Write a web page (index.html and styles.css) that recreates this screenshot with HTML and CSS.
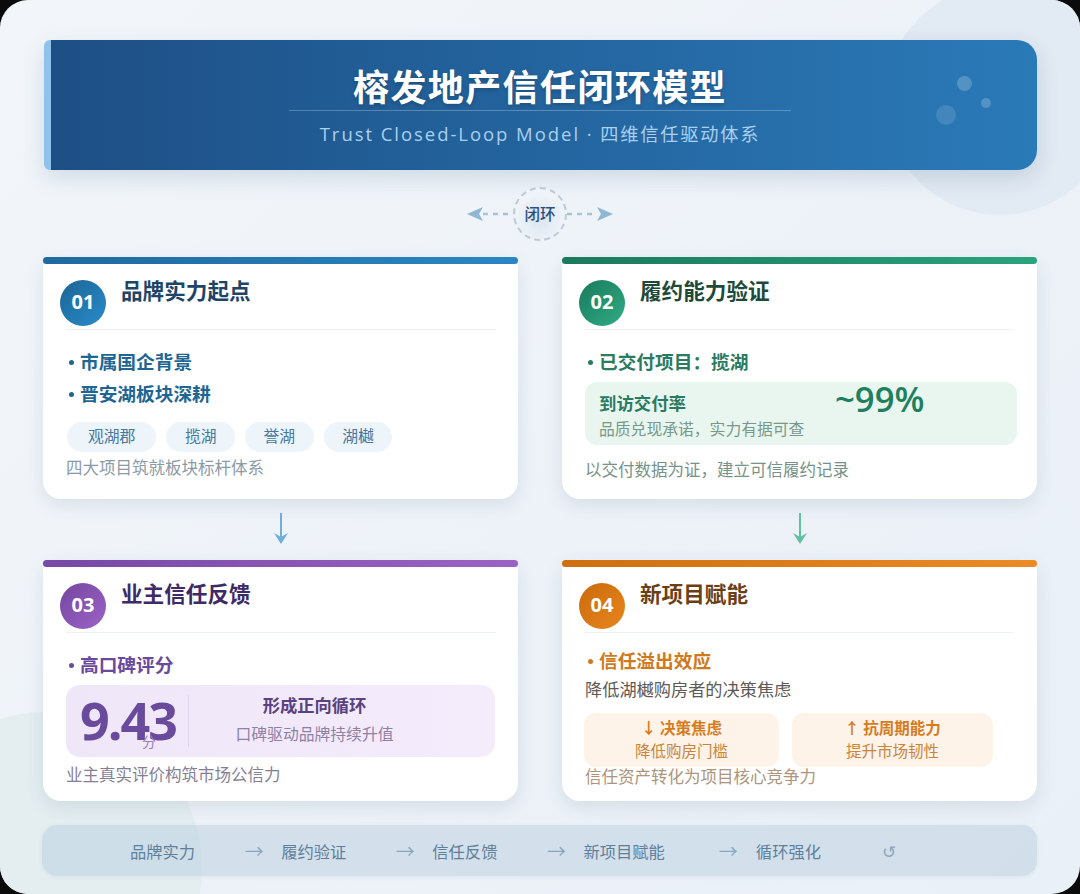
FILE: index.html
```html
<!DOCTYPE html>
<html lang="zh-CN">
<head>
  <meta charset="UTF-8" />
  <title>榕发地产信任闭环模型</title>
  <link rel="stylesheet" href="styles.css">
</head>
<body>
  <div class="page">
    <div class="bg-circle bg-circle-top"></div>
    <div class="bg-circle bg-circle-bottom"></div>

    <header class="banner">
      <span class="dot dot-a"></span>
      <span class="dot dot-b"></span>
      <span class="dot dot-c"></span>
      <h1>榕发地产信任闭环模型</h1>
      <p>Trust Closed-Loop Model · <span>四维信任驱动体系</span></p>
    </header>

    <div class="loop">
      <svg class="loop-arrow" width="46" height="20" viewBox="0 0 46 20">
        <path d="M16 10H46" stroke="#a8c3d8" stroke-width="2.5" stroke-dasharray="5 5" fill="none"/>
        <path d="M0 10L16 3L12 10L16 17Z" fill="#8fb6d2"/>
      </svg>
      <div class="loop-badge">闭环</div>
      <svg class="loop-arrow" width="46" height="20" viewBox="0 0 46 20">
        <path d="M0 10H30" stroke="#a8c3d8" stroke-width="2.5" stroke-dasharray="5 5" fill="none"/>
        <path d="M46 10L30 3L34 10L30 17Z" fill="#8fb6d2"/>
      </svg>
    </div>

    <div class="cards">
      <section class="card card-blue">
        <div class="card-bar"></div>
        <div class="card-head">
          <span class="num">01</span>
          <h2>品牌实力起点</h2>
        </div>
        <div class="card-body">
          <div class="bullet">市属国企背景</div>
          <div class="bullet bullet-second">晋安湖板块深耕</div>
          <div class="tags">
            <span>观湖郡</span>
            <span>揽湖</span>
            <span>誉湖</span>
            <span>湖樾</span>
          </div>
          <div class="note note-blue">四大项目筑就板块标杆体系</div>
        </div>
      </section>

      <section class="card card-green">
        <div class="card-bar"></div>
        <div class="card-head">
          <span class="num">02</span>
          <h2>履约能力验证</h2>
        </div>
        <div class="card-body">
          <div class="bullet">已交付项目&#xFF1A;揽湖</div>
          <div class="rate-box">
            <div class="rate-top">
              <strong>到访交付率</strong>
              <span class="rate-num">~99%</span>
            </div>
            <div class="rate-sub">品质兑现承诺&#xFF0C;实力有据可查</div>
          </div>
          <div class="note note-green">以交付数据为证&#xFF0C;建立可信履约记录</div>
        </div>
      </section>

      <div class="down">
        <svg width="16" height="34" viewBox="0 0 16 34">
          <path d="M8 1V26" stroke="#6daedb" stroke-width="2" fill="none"/>
          <path d="M1 21L8 32L15 21L8 25Z" fill="#6daedb"/>
        </svg>
      </div>
      <div class="down">
        <svg width="16" height="34" viewBox="0 0 16 34">
          <path d="M8 1V26" stroke="#62c0a2" stroke-width="2" fill="none"/>
          <path d="M1 21L8 32L15 21L8 25Z" fill="#62c0a2"/>
        </svg>
      </div>

      <section class="card card-purple">
        <div class="card-bar"></div>
        <div class="card-head">
          <span class="num">03</span>
          <h2>业主信任反馈</h2>
        </div>
        <div class="card-body">
          <div class="bullet">高口碑评分</div>
          <div class="score-box">
            <div class="score">9.43<span>分</span></div>
            <div class="score-text">
              <strong>形成正向循环</strong>
              <span>口碑驱动品牌持续升值</span>
            </div>
          </div>
          <div class="note note-purple">业主真实评价构筑市场公信力</div>
        </div>
      </section>

      <section class="card card-orange">
        <div class="card-bar"></div>
        <div class="card-head">
          <span class="num">04</span>
          <h2>新项目赋能</h2>
        </div>
        <div class="card-body">
          <div class="bullet bullet-tight">信任溢出效应</div>
          <div class="desc">降低湖樾购房者的决策焦虑</div>
          <div class="effects">
            <div class="effect effect-left"><strong>↓ 决策焦虑</strong><span>降低购房门槛</span></div>
            <div class="effect effect-right"><strong>↑ 抗周期能力</strong><span>提升市场韧性</span></div>
          </div>
          <div class="note note-orange">信任资产转化为项目核心竞争力</div>
        </div>
      </section>
    </div>

    <footer class="flow">
      <span class="step">品牌实力</span>
      <span class="step-arrow">→</span>
      <span class="step">履约验证</span>
      <span class="step-arrow">→</span>
      <span class="step">信任反馈</span>
      <span class="step-arrow">→</span>
      <span class="step">新项目赋能</span>
      <span class="step-arrow step-arrow-wide">→</span>
      <span class="step">循环强化</span>
      <span class="step-arrow step-end">↺</span>
    </footer>
  </div>
</body>
</html>
```

FILE: styles.css
```css
* {
  box-sizing: border-box;
}

body {
  margin: 0;
  background: #0b0b0b;
  font-family: "Noto Sans CJK SC", "Noto Sans", sans-serif;
}

.page {
  position: relative;
  width: 1080px;
  height: 894px;
  padding: 40px 43px 0;
  overflow: hidden;
  border-radius: 28px;
  background: linear-gradient(135deg, #f2f6fa 0%, #edf2f8 55%, #e9f0f7 100%);
}

.bg-circle {
  position: absolute;
  border-radius: 50%;
}

.bg-circle-top {
  left: 885px;
  top: -15px;
  width: 230px;
  height: 230px;
  background: #e2eaf3;
}

.bg-circle-bottom {
  left: -110px;
  top: 712px;
  width: 312px;
  height: 312px;
  background: #e4eef1;
}

/* banner */
.banner {
  position: relative;
  height: 130px;
  margin-left: 1px;
  padding: 20px 8px 0 0;
  border-left: 7px solid #8fc3ec;
  border-radius: 6px 20px 20px 6px;
  background: linear-gradient(90deg, #1d4f85 0%, #2a7ab8 100%);
  box-shadow: 0 8px 22px rgba(40, 80, 120, 0.16);
  text-align: center;
  color: #fff;
}

.banner h1 {
  width: 502px;
  margin: 0 auto;
  border-bottom: 1px solid rgba(255, 255, 255, 0.25);
  font-size: 36px;
  line-height: 50px;
  letter-spacing: 1.4px;
  font-weight: 700;
  text-shadow: 0 2px 4px rgba(0, 0, 0, 0.2);
}

.banner p {
  margin: 6px 0 0;
  font-family: "Open Sans", "Noto Sans CJK SC", sans-serif;
  font-size: 18.5px;
  line-height: 32px;
  letter-spacing: 1.95px;
  color: #a9d0ee;
}

.banner p span {
  font-family: "Noto Sans CJK SC", sans-serif;
  font-size: 18.2px;
  letter-spacing: 1.8px;
}

.dot {
  position: absolute;
  border-radius: 50%;
  background: rgba(255, 255, 255, 0.2);
}

.dot-a {
  left: 906px;
  top: 36px;
  width: 15px;
  height: 15px;
}

.dot-b {
  left: 930px;
  top: 58px;
  width: 10px;
  height: 10px;
}

.dot-c {
  left: 885px;
  top: 65px;
  width: 20px;
  height: 20px;
  background: rgba(255, 255, 255, 0.12);
}

/* loop badge */
.loop {
  position: relative;
  height: 87px;
  display: flex;
  align-items: center;
  justify-content: center;
}

.loop-badge {
  width: 54px;
  height: 54px;
  padding-bottom: 2px;
  display: flex;
  align-items: center;
  justify-content: center;
  border: 2px dashed #bcc9d6;
  border-radius: 50%;
  background: radial-gradient(circle at 50% 60%, #d9e5f0 0%, #f0f4f9 65%);
  font-size: 15.5px;
  font-weight: 500;
  color: #2b4f78;
}

/* cards */
.cards {
  position: relative;
  display: grid;
  grid-template-columns: 475px 475px;
  grid-template-rows: 242px 61px 241px;
  column-gap: 44px;
}

.card {
  border-radius: 10px 10px 18px 18px;
  background: #fff;
  box-shadow: 0 6px 18px rgba(50, 80, 110, 0.12);
}

.card-bar {
  height: 7px;
  border-radius: 4px;
}

.card-blue .card-bar { background: linear-gradient(90deg, #1d6a9e, #2a86c4); }
.card-green .card-bar { background: linear-gradient(90deg, #1a7a5c, #2aa37c); }
.card-purple .card-bar { background: linear-gradient(90deg, #7748a5, #9b63c4); }
.card-orange .card-bar { background: linear-gradient(90deg, #cf6f10, #ec8a24); }

.card-head {
  display: flex;
  align-items: flex-start;
  gap: 15px;
  height: 66px;
  margin: 0 22px 0 23px;
  padding-top: 16px;
  border-bottom: 1px solid #eef1f4;
}

.card-green .card-head,
.card-orange .card-head {
  margin-right: 24px;
}

.num {
  flex: none;
  width: 46px;
  height: 46px;
  margin-left: -6px;
  padding-bottom: 3px;
  border-radius: 50%;
  display: flex;
  align-items: center;
  justify-content: center;
  font-family: "Open Sans", sans-serif;
  font-size: 20px;
  font-weight: 700;
  color: #fff;
}

.card h2 {
  margin: -3px 0 0;
  font-size: 21.6px;
  line-height: 26px;
  font-weight: 700;
}

.card-blue .num { background: linear-gradient(135deg, #1b6494, #2a8ccb); }
.card-green .num { background: linear-gradient(135deg, #1a7a5c, #2fac84); }
.card-purple .num { background: linear-gradient(135deg, #74469f, #9c63c6); }
.card-orange .num { background: linear-gradient(135deg, #c96a0c, #e8861e); }

.card-blue h2 { color: #1e4468; }
.card-green h2 { color: #1e4a3a; }
.card-purple h2 { color: #3d2a66; }
.card-orange h2 { color: #6b3f16; }

.card-body {
  padding: 18px 22px 0 23px;
}

.bullet {
  font-size: 18.7px;
  line-height: 26px;
  font-weight: 700;
}

.bullet::before {
  content: "";
  display: inline-block;
  width: 5px;
  height: 5px;
  margin: 0 6px 3px 3px;
  border-radius: 50%;
  background: currentColor;
  vertical-align: middle;
}

.bullet-second {
  margin-top: 6px;
}

.bullet-tight {
  margin-top: -4px;
}

.card-blue .bullet { color: #1f6692; }
.card-green .bullet { color: #2b7a62; }
.card-purple .bullet { color: #6a4a9c; }
.card-orange .bullet { color: #d07a1c; }

.tags {
  display: flex;
  gap: 10px;
  margin: 16px 0 0 1px;
}

.tags span {
  height: 30px;
  padding: 0 18.5px;
  border-radius: 15px;
  background: #edf4fa;
  font-size: 15.8px;
  line-height: 28px;
  color: #43789f;
}

.tags span:first-child {
  padding: 0 21px;
}

.note {
  font-size: 16.5px;
  line-height: 24px;
}

.note-blue {
  margin-top: 3px;
  color: #8a9aa8;
}

.note-green {
  margin-top: 12px;
  color: #76928a;
}

.note-purple {
  margin-top: 5px;
  color: #857f96;
}

.note-orange {
  margin-top: -3px;
  color: #ad947c;
}

/* stat boxes */
.rate-box {
  width: 432px;
  height: 63px;
  margin-top: 8px;
  padding: 0 14px;
  border-radius: 12px;
  background: #e8f6ef;
}

.rate-top {
  display: flex;
  height: 34px;
  align-items: center;
}

.rate-top strong {
  width: 236px;
  margin-top: 7px;
  font-size: 17.4px;
  color: #2b7a62;
}

.rate-num {
  font-family: "Open Sans", sans-serif;
  font-size: 34.7px;
  line-height: 34px;
  font-weight: 600;
  color: #1f7f5e;
}

.rate-sub {
  font-size: 15.8px;
  line-height: 24px;
  margin-top: 1px;
  color: #79988c;
}

.score-box {
  display: flex;
  align-items: center;
  width: 429px;
  height: 72px;
  margin-top: 8px;
  padding-left: 14px;
  border-radius: 14px;
  background: linear-gradient(90deg, #efe6f8, #f4ecfb);
}

.score {
  position: relative;
  width: 109px;
  height: 52px;
  border-right: 1px solid #e2d6ee;
  font-family: "Open Sans", sans-serif;
  font-size: 52px;
  line-height: 50px;
  letter-spacing: -2px;
  font-weight: 700;
  color: #6a4a9c;
}

.score span {
  position: absolute;
  left: 62px;
  top: 37px;
  font-family: "Noto Sans CJK SC", sans-serif;
  font-size: 14px;
  line-height: 18px;
  letter-spacing: 0;
  font-weight: 400;
  color: #9a80bd;
}

.score-text {
  flex: 1;
  display: flex;
  flex-direction: column;
  align-items: center;
  padding: 0 55px 4px 0;
}

.score-text strong {
  font-size: 17.3px;
  line-height: 26px;
  color: #59427f;
}

.score-text span {
  margin-top: 4px;
  font-size: 15.8px;
  line-height: 24px;
  color: #8e80a6;
}

.desc {
  margin-top: 3px;
  font-size: 17.2px;
  line-height: 26px;
  color: #5d5a57;
}

.effects {
  display: flex;
  gap: 13px;
  margin-top: 11px;
  margin-left: -1px;
}

.effect {
  height: 54px;
  padding-top: 3px;
  border-radius: 12px;
  background: #fdf3e8;
  display: flex;
  flex-direction: column;
  align-items: center;
  font-size: 15.5px;
  line-height: 23px;
  color: #c9853c;
}

.effect strong {
  color: #d67c1e;
}

.effect-left {
  width: 195px;
}

.effect-right {
  width: 201px;
}

.down {
  display: flex;
  justify-content: center;
  align-items: center;
  padding-bottom: 1px;
}

/* bottom flow */
.flow {
  position: relative;
  display: flex;
  align-items: center;
  width: 995px;
  height: 51px;
  margin: 24px 0 0 -1px;
  padding-left: 88px;
  border-radius: 15px;
  background: rgba(176, 200, 220, 0.42);
  box-shadow: 0 1px 4px rgba(60, 90, 120, 0.08);
  font-size: 16.3px;
  color: #5e7f9b;
}

.step-arrow {
  width: 86px;
  padding-left: 32px;
  text-align: center;
  font-size: 19px;
  color: #8aa6bc;
}

.step-arrow-wide {
  width: 91px;
  padding-left: 36px;
}

.step-end {
  width: 136px;
  padding-left: 0;
  font-size: 17px;
}
```
